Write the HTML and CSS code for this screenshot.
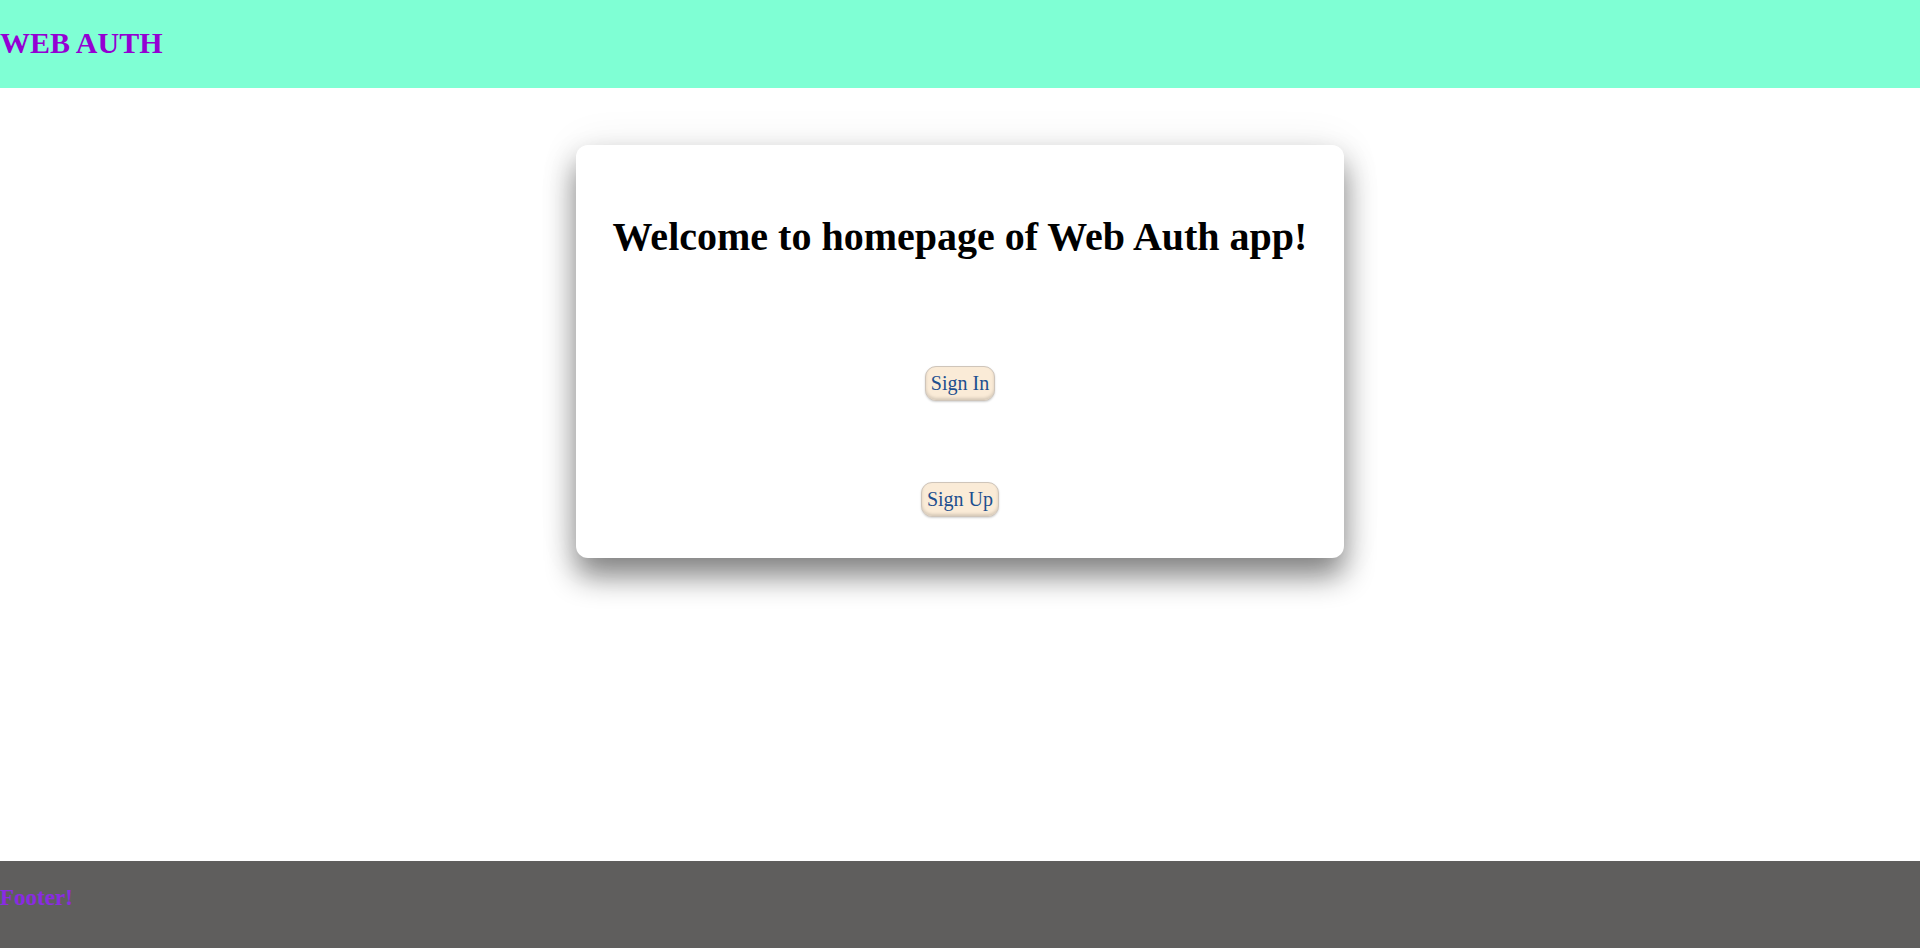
FILE: index.html
```html
<!DOCTYPE html>
<html lang="en">
<head>
<meta charset="utf-8">
<title>Web Auth</title>
<link rel="stylesheet" href="styles.css">
</head>
<body>
<div class="page">
  <header class="header">
    <h1 class="brand">WEB AUTH</h1>
  </header>
  <main class="main">
    <section class="card">
      <h1 class="title">Welcome to homepage of Web Auth app!</h1>
      <div class="actions">
        <button class="btn" type="button">Sign In</button>
        <button class="btn" type="button">Sign Up</button>
      </div>
    </section>
  </main>
  <footer class="footer">
    <h2 class="footer-text">Footer!</h2>
  </footer>
</div>
</body>
</html>
```

FILE: styles.css
```css
html, body {
  margin: 0;
  padding: 0;
  background: #ffffff;
  font-family: "Liberation Serif", "Times New Roman", serif;
}

.page {
  display: flex;
  flex-direction: column;
  height: 948px;
  overflow: hidden;
}

.header {
  height: 88px;
  box-sizing: border-box;
  background: #7fffd4;
  padding-top: 26px;
  flex-shrink: 0;
}

.brand {
  margin: 0;
  font-size: 30px;
  font-weight: bold;
  color: #9400d3;
  line-height: 34px;
}

.main {
  flex: 1;
  display: flex;
  justify-content: center;
  align-items: flex-start;
  padding-top: 57px;
}

.card {
  width: 768px;
  height: 413px;
  box-sizing: border-box;
  background: #ffffff;
  border-radius: 12px;
  box-shadow: 0 18px 30px rgba(0, 0, 0, 0.48), 0 0 44px rgba(0, 0, 0, 0.07);
  display: flex;
  flex-direction: column;
  align-items: center;
  padding-top: 69px;
}

.title {
  margin: 0;
  font-size: 40px;
  font-weight: bold;
  color: #000000;
  line-height: 46px;
  text-align: center;
}

.actions {
  display: flex;
  flex-direction: column;
  align-items: center;
  gap: 81px;
  margin-top: 106px;
}

.btn {
  font-family: "Liberation Serif", "Times New Roman", serif;
  font-size: 20px;
  line-height: 23px;
  color: #1d4f8f;
  background: #faebd7;
  border: 1px solid #cfc5ba;
  border-radius: 11px;
  padding: 5px 5px;
  box-shadow: inset 0 -2px 3px rgba(0, 0, 0, 0.14), 0 1px 2px rgba(0, 0, 0, 0.18);
  cursor: pointer;
}

.footer {
  height: 87px;
  box-sizing: border-box;
  background: #5f5e5d;
  padding-top: 24px;
  flex-shrink: 0;
}

.footer-text {
  margin: 0;
  font-size: 23px;
  font-weight: bold;
  color: #8a2be2;
  line-height: 26px;
}
```
